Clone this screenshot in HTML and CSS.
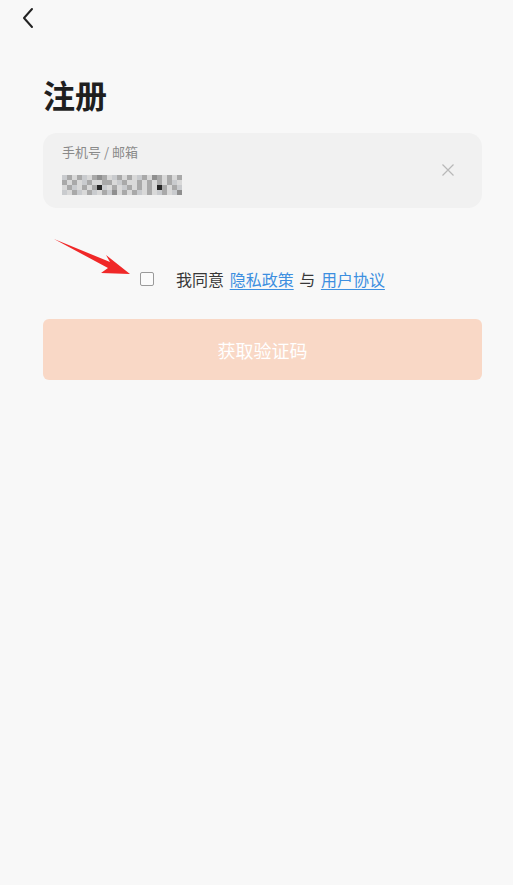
FILE: index.html
```html
<!DOCTYPE html>
<html lang="zh">
<head>
<meta charset="utf-8">
<link rel="stylesheet" href="styles.css">
</head>
<body>
<div class="page">
  <div class="topbar">
    <svg class="back" width="14" height="22" viewBox="0 0 14 22"><path d="M11 2 L3 11 L11 20" fill="none" stroke="#222" stroke-width="2" stroke-linecap="round" stroke-linejoin="round"/></svg>
  </div>
  <h1 class="title">注册</h1>
  <div class="field">
    <div class="field-main">
      <div class="label">手机号 / 邮箱</div>
      <div class="mosaic">
        <i class="a"></i><i class="b"></i><i class="c"></i><i class="b"></i><i class="a"></i><i class="c"></i><i class="b"></i><i class="e"></i><i class="b"></i><i class="c"></i><i class="a"></i><i class="b"></i><i class="c"></i><i class="b"></i><i class="c"></i><i class="a"></i><i class="b"></i><i class="c"></i><i class="e"></i><i class="b"></i><i class="c"></i><i class="b"></i><i class="c"></i><i class="b"></i>
        <i class="b"></i><i class="c"></i><i class="b"></i><i class="c"></i><i class="a"></i><i class="b"></i><i class="c"></i><i class="c"></i><i class="b"></i><i class="b"></i><i class="c"></i><i class="a"></i><i class="b"></i><i class="c"></i><i class="c"></i><i class="b"></i><i class="c"></i><i class="b"></i><i class="c"></i><i class="b"></i><i class="c"></i><i class="b"></i><i class="a"></i><i class="c"></i>
        <i class="c"></i><i class="b"></i><i class="a"></i><i class="c"></i><i class="b"></i><i class="c"></i><i class="b"></i><i class="d"></i><i class="a"></i><i class="c"></i><i class="b"></i><i class="c"></i><i class="a"></i><i class="b"></i><i class="c"></i><i class="b"></i><i class="c"></i><i class="b"></i><i class="c"></i><i class="d"></i><i class="b"></i><i class="c"></i><i class="b"></i><i class="a"></i>
        <i class="a"></i><i class="c"></i><i class="b"></i><i class="a"></i><i class="c"></i><i class="b"></i><i class="a"></i><i class="c"></i><i class="b"></i><i class="a"></i><i class="e"></i><i class="c"></i><i class="b"></i><i class="c"></i><i class="b"></i><i class="a"></i><i class="c"></i><i class="b"></i><i class="c"></i><i class="a"></i><i class="b"></i><i class="c"></i><i class="a"></i><i class="e"></i>
      </div>
    </div>
    <svg class="clear" width="14" height="14" viewBox="0 0 14 14"><path d="M1.5 1.5 L12.5 12.5 M12.5 1.5 L1.5 12.5" stroke="#b8b8b8" stroke-width="1.2" fill="none"/></svg>
  </div>
  <div class="agree-wrap">
    <svg class="arrow" width="80" height="40" viewBox="0 0 80 40"><path d="M0 2 L56 25 L52 18 L76 37 L47 36 L54 31 Z" fill="#f02828"/></svg>
    <div class="agree">
      <span class="box"></span>
      <span class="agree-text">我同意 <a class="link">隐私政策</a> 与 <a class="link">用户协议</a></span>
    </div>
  </div>
  <button class="submit">获取验证码</button>
</div>
</body>
</html>
```
FILE: styles.css
```css
html, body {
  margin: 0;
  padding: 0;
  background: #f8f8f8;
  font-family: "Noto Sans CJK SC", "Noto Sans", sans-serif;
}
.page {
  width: 513px;
  height: 885px;
  padding: 0 31px 0 43px;
  box-sizing: border-box;
}
.topbar {
  height: 36px;
  display: flex;
  align-items: center;
  margin-left: -22px;
}
.back {
  display: block;
  margin-top: 0;
}
.title {
  margin: 35px 0 0 0;
  font-size: 32px;
  font-weight: 700;
  line-height: 46px;
  color: #1f1f1f;
}
.field {
  margin-top: 16px;
  height: 75px;
  background: #f1f1f1;
  border-radius: 14px;
  display: flex;
  align-items: center;
  padding: 0 27px 0 19px;
  box-sizing: border-box;
}
.field-main {
  flex: 1;
  display: flex;
  flex-direction: column;
  align-self: flex-start;
  padding-top: 10px;
}
.label {
  font-size: 13px;
  line-height: 18px;
  color: #8a8a8a;
}
.mosaic {
  margin-top: 14px;
  display: grid;
  grid-template-columns: repeat(24, 5px);
  grid-auto-rows: 5px;
  width: 120px;
}
.mosaic i { display: block; }
.mosaic .a { background: #c9cbce; }
.mosaic .b { background: #a9a9a9; }
.mosaic .c { background: #d9d9d9; }
.mosaic .d { background: #262626; }
.mosaic .e { background: #8f8f8f; }
.clear {
  display: block;
  margin-top: -2px;
}
.agree-wrap {
  position: relative;
  height: 111px;
  display: flex;
  align-items: flex-start;
  justify-content: center;
}
.arrow {
  position: absolute;
  left: 11px;
  top: 29px;
}
.agree {
  margin-top: 59px;
  display: flex;
  align-items: center;
}
.box {
  width: 12px;
  height: 12px;
  border: 1px solid #9a9a9a;
  border-radius: 2px;
  margin-right: 22px;
  background: #fbfbfb;
}
.agree-text {
  font-size: 16px;
  line-height: 24px;
  color: #383838;
  word-spacing: 2px;
}
.link {
  color: #3d8fe0;
  text-decoration: underline;
  text-underline-offset: 3px;
}
.submit {
  display: block;
  width: 100%;
  height: 61px;
  border: 0;
  border-radius: 6px;
  background: #f9d8c6;
  color: #ffffff;
  font-family: inherit;
  font-size: 18px;
  padding: 0;
}
```
